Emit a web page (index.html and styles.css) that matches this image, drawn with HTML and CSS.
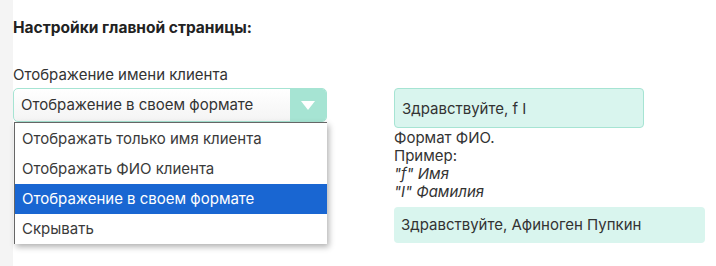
FILE: index.html
```html
<!DOCTYPE html>
<html lang="ru">
<head>
    <meta charset="UTF-8">
    <meta name="viewport" content="width=device-width, initial-scale=1.0">
    <title>Настройки главной страницы</title>
    <link rel="stylesheet" href="styles.css">
</head>
<body>
    <div class="panel">
        <h3 class="section-title">Настройки главной страницы:</h3>
        <div class="settings-row">
            <div class="field">
                <label class="field-label">Отображение имени клиента</label>
                <div class="select-wrap">
                    <div class="select">
                        <span class="select-value">Отображение в своем формате</span>
                        <span class="select-arrow">
                            <svg width="14" height="9" viewBox="0 0 14 9"><path d="M0 0 H14 L7 9 Z" fill="#fff"/></svg>
                        </span>
                    </div>
                    <ul class="select-menu">
                        <li>Отображать только имя клиента</li>
                        <li>Отображать ФИО клиента</li>
                        <li class="active">Отображение в своем формате</li>
                        <li>Скрывать</li>
                    </ul>
                </div>
            </div>
            <div class="preview">
                <input class="format-input" type="text" value="Здравствуйте, f I">
                <div class="hint">
                    <div>Формат ФИО.</div>
                    <div>Пример:</div>
                    <div><em>"f" Имя</em></div>
                    <div><em>"I" Фамилия</em></div>
                </div>
                <div class="result">Здравствуйте, Афиноген Пупкин</div>
            </div>
        </div>
    </div>
</body>
</html>
```

FILE: styles.css
```css
body {
    margin: 0;
    padding: 0;
    background-color: #f4f4f4;
    font-family: Inter, "Noto Sans", sans-serif;
    color: #333;
}

.panel {
    margin-left: 13px;
    min-height: 100vh;
    box-sizing: border-box;
    background-color: #fff;
    padding-top: 19px;
}

.section-title {
    margin: 0 0 29px;
    font-size: 15.5px;
    font-weight: bold;
    color: #222;
    line-height: 18px;
}

.settings-row {
    display: flex;
    gap: 67px;
}

.field {
    width: 314px;
}

.field-label {
    display: block;
    font-size: 15px;
    line-height: 18px;
    margin-bottom: 4px;
}

.select-wrap {
    position: relative;
}

.select {
    display: flex;
    height: 34px;
    border: 1px solid #a6e4d3;
    border-radius: 5px;
    box-sizing: border-box;
    overflow: hidden;
    background: linear-gradient(#fff, #f4f4f4);
}

.select-value {
    flex: 1;
    padding-left: 7px;
    font-size: 15px;
    line-height: 32px;
}

.select-arrow {
    width: 36px;
    background-color: #a6e4d3;
    display: flex;
    align-items: center;
    justify-content: center;
}

/* Dropdown menu */
.select-menu {
    position: absolute;
    top: 34px;
    left: 1px;
    width: 313px;
    margin: 0;
    padding: 1px 0 0;
    list-style: none;
    background-color: #fff;
    border-left: 1px solid #666;
    border-top: 1px solid #666;
    box-sizing: border-box;
    box-shadow: 2px 3px 6px rgba(0, 0, 0, 0.3);
}

.select-menu li {
    height: 30px;
    line-height: 30px;
    padding-left: 7px;
    font-size: 15px;
    color: #3a3a3a;
}

.select-menu li.active {
    background-color: #1966d2;
    color: #fff;
}

.preview {
    padding-top: 22px;
    width: 311px;
}

.format-input {
    display: block;
    width: 250px;
    height: 40px;
    box-sizing: border-box;
    padding: 0 7px;
    border: 1px solid #a6e4d3;
    border-radius: 4px;
    background-color: #d9f5ee;
    font-family: inherit;
    font-size: 15px;
    color: #333;
}

.hint {
    font-size: 15px;
    line-height: 18px;
    margin-top: 1px;
}

.result {
    margin-top: 6px;
    height: 36px;
    line-height: 36px;
    padding-left: 7px;
    border-radius: 4px;
    background-color: #d9f5ee;
    font-size: 15px;
}
```
